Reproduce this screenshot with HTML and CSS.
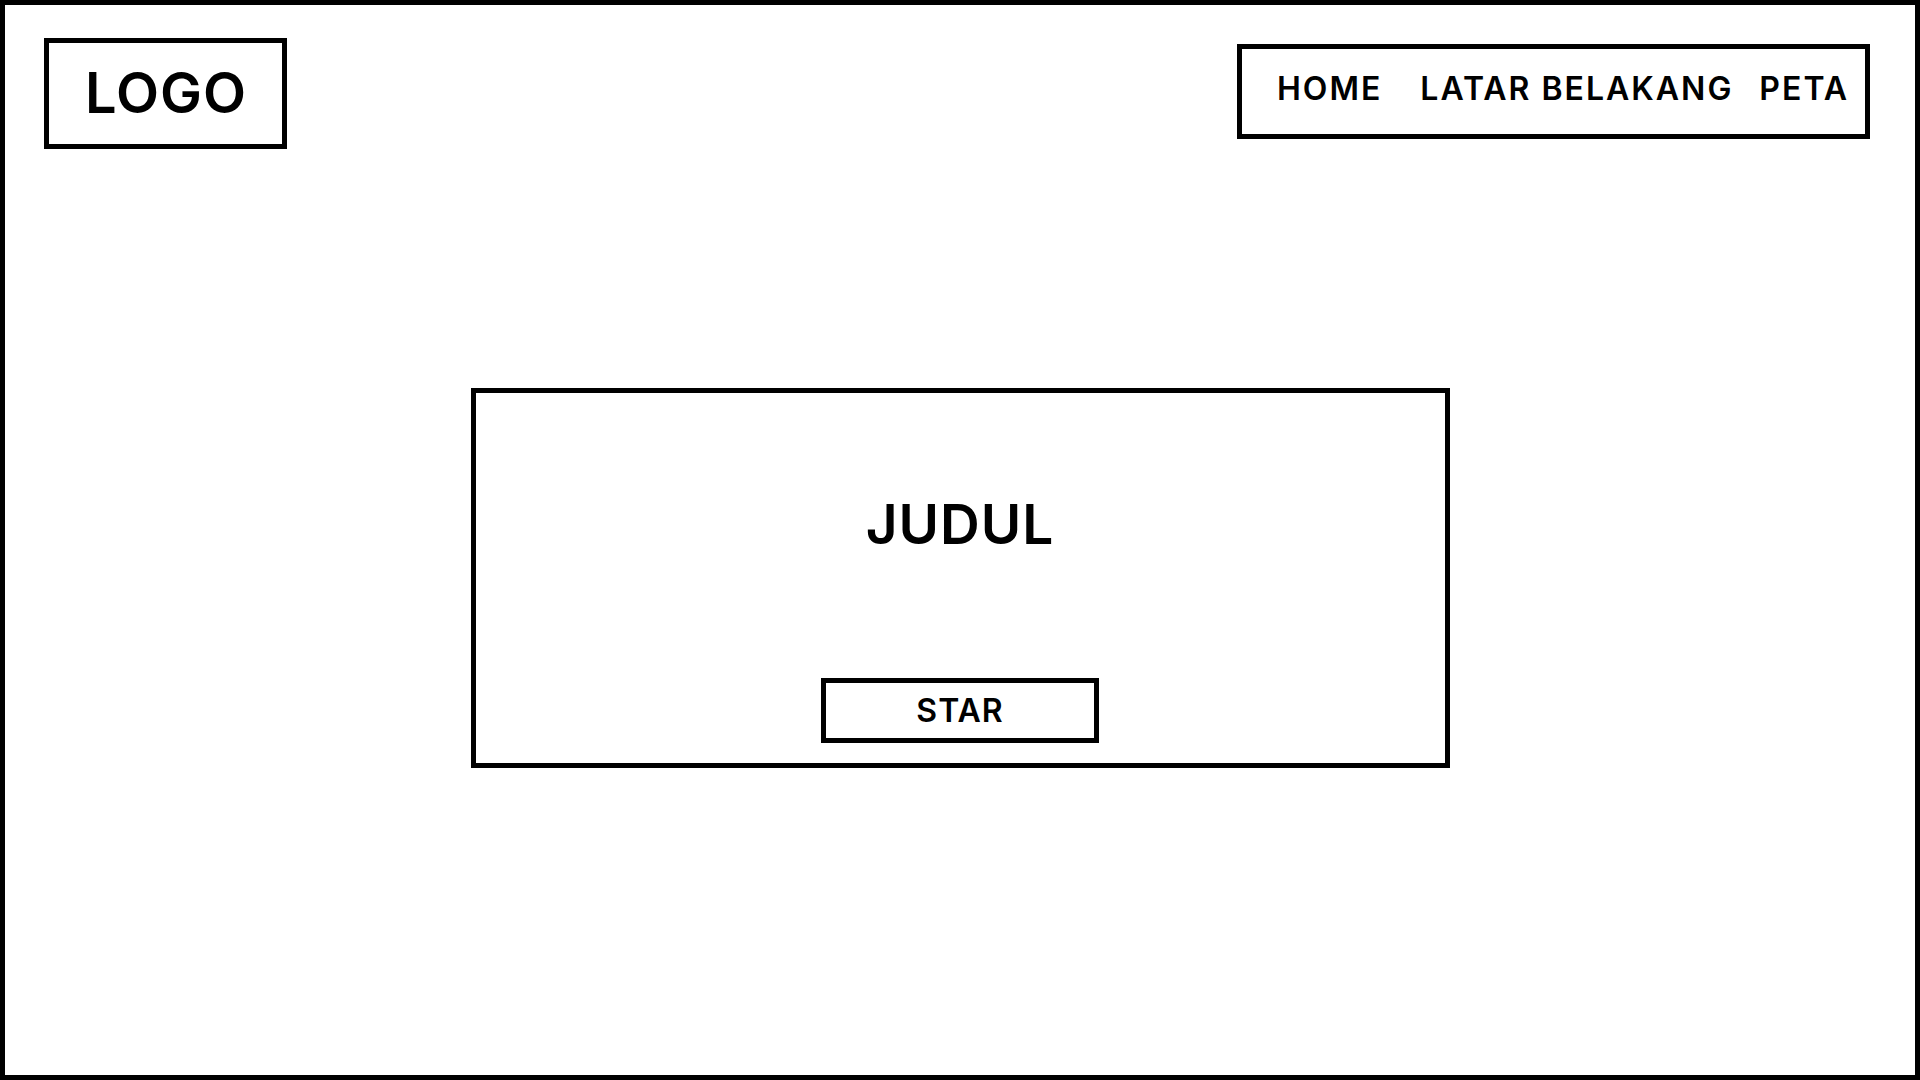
FILE: index.html
```html
<!DOCTYPE html>
<html lang="en">
<head>
    <meta charset="UTF-8">
    <meta name="viewport" content="width=device-width, initial-scale=1.0">
    <title>Wireframe</title>
    <link rel="stylesheet" href="styles.css">
</head>
<body>
    <div class="page">
        <header class="header">
            <div class="logo">LOGO</div>
            <nav class="nav">
                <a href="#" class="nav-home">HOME</a>
                <a href="#" class="nav-latar">LATAR BELAKANG</a>
                <a href="#">PETA</a>
            </nav>
        </header>
        <main class="hero">
            <h1 class="hero-title">JUDUL</h1>
            <button class="start-btn">STAR</button>
        </main>
    </div>
</body>
</html>
```

FILE: styles.css
```css
body {
    margin: 0;
    padding: 0;
    background-color: #fff;
    font-family: "Inter", "Noto Sans", sans-serif;
    color: #000;
}
.page {
    box-sizing: border-box;
    width: 1920px;
    height: 1080px;
    border: 5px solid #000;
}
.header {
    display: flex;
    justify-content: space-between;
    align-items: flex-start;
    padding: 33px 45px 0 39px;
}
.logo {
    box-sizing: border-box;
    width: 243px;
    height: 111px;
    border: 5px solid #000;
    display: flex;
    align-items: center;
    justify-content: center;
    font-size: 56px;
    font-weight: 600;
    line-height: 1;
    letter-spacing: 1px;
    padding: 0 0 2px 1px;
}
.nav {
    box-sizing: border-box;
    width: 633px;
    height: 95px;
    margin-top: 6px;
    border: 5px solid #000;
    display: flex;
    align-items: flex-start;
    padding: 24px 19px 0 35px;
}
.nav a {
    color: #000;
    text-decoration: none;
    font-size: 32px;
    font-weight: 600;
    line-height: 1;
    letter-spacing: 2px;
    white-space: nowrap;
}
.nav-home {
    margin-right: 38px;
}
.nav-latar {
    margin-right: 26px;
}
.hero {
    box-sizing: border-box;
    width: 979px;
    margin: 239px auto 0;
    border: 5px solid #000;
    display: flex;
    flex-direction: column;
    align-items: center;
    padding: 104px 0 20px;
}
.hero-title {
    margin: 0;
    font-size: 55px;
    font-weight: 600;
    line-height: 1;
    letter-spacing: 1px;
}
.start-btn {
    box-sizing: border-box;
    width: 278px;
    height: 65px;
    margin-top: 126px;
    border: 5px solid #000;
    background: #fff;
    font-family: "Inter", "Noto Sans", sans-serif;
    font-size: 32px;
    font-weight: 600;
    line-height: 1;
    letter-spacing: 1px;
    color: #000;
    padding: 0;
}
```
